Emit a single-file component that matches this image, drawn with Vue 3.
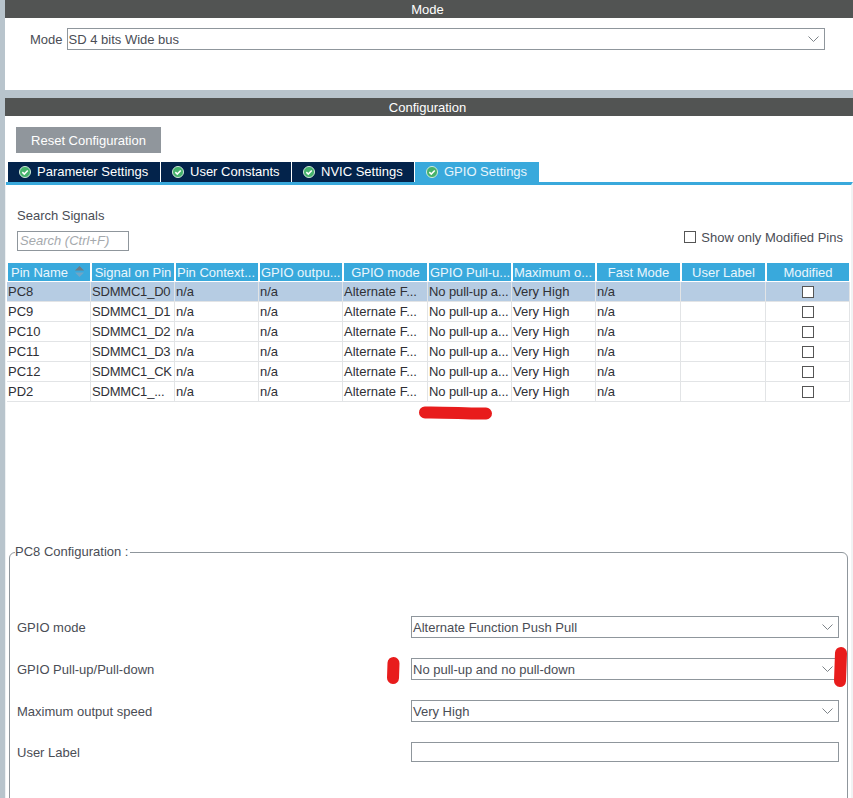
<script setup>
const tabs = [
  { name: 'Parameter Settings', width: 152 },
  { name: 'User Constants', width: 130 },
  { name: 'NVIC Settings', width: 122 },
  { name: 'GPIO Settings', width: 124, active: true },
]
const columns = [
  { name: 'Pin Name', sort: true },
  { name: 'Signal on Pin' },
  { name: 'Pin Context...', left: true },
  { name: 'GPIO outpu...', left: true },
  { name: 'GPIO mode' },
  { name: 'GPIO Pull-u...', left: true },
  { name: 'Maximum o...', left: true },
  { name: 'Fast Mode' },
  { name: 'User Label' },
  { name: 'Modified' },
]
const rows = [
  ['PC8', 'SDMMC1_D0'],
  ['PC9', 'SDMMC1_D1'],
  ['PC10', 'SDMMC1_D2'],
  ['PC11', 'SDMMC1_D3'],
  ['PC12', 'SDMMC1_CK'],
  ['PD2', 'SDMMC1_...'],
]
const fields = [
  { label: 'GPIO mode', value: 'Alternate Function Push Pull' },
  { label: 'GPIO Pull-up/Pull-down', value: 'No pull-up and no pull-down' },
  { label: 'Maximum output speed', value: 'Very High' },
]
</script>

<template>
  <div class="page">
    <section class="mode">
      <h2 class="bar">Mode</h2>
      <div class="mode-body">
        <span class="mode-label">Mode</span>
        <div class="select mode-select">
          <span>SD 4 bits Wide bus</span>
          <svg class="chev" viewBox="0 0 11 6"><path d="M.5.5l5 5 5-5" /></svg>
        </div>
      </div>
    </section>

    <section class="config">
      <h2 class="bar">Configuration</h2>
      <button class="reset">Reset Configuration</button>
      <div class="tabs">
        <div v-for="t in tabs" :key="t.name" class="tab" :class="{ active: t.active }" :style="{ width: t.width + 'px' }">
          <svg class="ok" viewBox="0 0 13 13">
            <circle cx="6.5" cy="6.5" r="6" />
            <path d="M3.6 6.6l2.1 2.1 3.8-3.9" />
          </svg>
          <span>{{ t.name }}</span>
        </div>
      </div>
      <div class="content">
        <div class="search-row">
          <div class="search">
            <label>Search Signals</label>
            <div class="search-input">Search (Ctrl+F)</div>
          </div>
          <div class="only-modified">
            <span class="check"></span>
            <span>Show only Modified Pins</span>
          </div>
        </div>

        <div class="table">
          <div class="tr thead">
            <div v-for="c in columns" :key="c.name" class="th" :class="{ left: c.left, sorted: c.sort }">
              <span>{{ c.name }}</span>
              <svg v-if="c.sort" class="sort" viewBox="0 0 9 11">
                <path class="up" d="M4.5 0L9 4.5H0z" />
                <path class="down" d="M0 6.5h9L4.5 11z" />
              </svg>
            </div>
          </div>
          <div v-for="(r, i) in rows" :key="r[0]" class="tr row" :class="{ selected: i === 0 }">
            <div class="td">{{ r[0] }}</div>
            <div class="td signal">{{ r[1] }}</div>
            <div class="td">n/a</div>
            <div class="td">n/a</div>
            <div class="td">Alternate F...</div>
            <div class="td tight">No pull-up a...</div>
            <div class="td">Very High</div>
            <div class="td">n/a</div>
            <div class="td"></div>
            <div class="td center"><span class="check"></span></div>
          </div>
        </div>

        <fieldset class="pin-config">
          <legend>PC8 Configuration :</legend>
          <div v-for="f in fields" :key="f.label" class="field">
            <label>{{ f.label }}</label>
            <div class="select">
              <span>{{ f.value }}</span>
              <svg class="chev" viewBox="0 0 11 6"><path d="M.5.5l5 5 5-5" /></svg>
            </div>
          </div>
          <div class="field last">
            <label>User Label</label>
            <div class="text-input"></div>
          </div>
        </fieldset>
      </div>
    </section>

    <svg class="marks" viewBox="0 0 853 798">
      <path d="M425 412.500C445 412 470 414 486 413.500" />
      <path d="M393.500 663L393 678" />
      <path d="M841 653L840 681" />
    </svg>
  </div>
</template>

<style>
html, body { margin: 0; padding: 0; overflow: hidden; }
</style>

<style scoped>
.page {
  position: relative;
  width: 853px;
  height: 798px;
  overflow: hidden;
  box-sizing: border-box;
  padding-left: 5px;
  background: #b8c4cc;
  font-family: "Liberation Sans", Arial, sans-serif;
  font-size: 13px;
  color: #4a4d55;
}
.bar {
  margin: 0;
  height: 18px;
  padding-right: 3px;
  line-height: 19px;
  background: #525453;
  color: #fff;
  font-size: 13px;
  font-weight: 400;
  text-align: center;
}
.mode { height: 90px; margin-bottom: 8px; background: #fff; }
.mode-body { display: flex; align-items: center; padding: 10px 28px 0 25px; }
.mode-label { margin-right: 4px; }
.mode-select { flex: 1; }
.select {
  box-sizing: border-box;
  height: 22px;
  display: flex;
  align-items: center;
  justify-content: space-between;
  padding: 0 5px 0 1px;
  border: 1px solid #8f969c;
  background: #fff;
}
.chev { width: 11px; height: 6px; fill: none; stroke: #7d8388; stroke-width: 1; }
.config { height: 700px; background: #fff; }
.reset {
  display: block;
  margin: 11px 0 0 11px;
  width: 145px;
  height: 26px;
  padding: 0;
  border: 0;
  background: #90969c;
  color: #fff;
  font: inherit;
}
.tabs { display: flex; gap: 1px; margin: 9px 0 0 3px; height: 20px; }
.tab {
  box-sizing: border-box;
  display: flex;
  align-items: center;
  padding-left: 11px;
  background: #03234b;
  color: #fff;
}
.tab span { margin-top: -2px; }
.tab.active { background: #39a9dc; color: #e8f5fb; }
.ok { width: 12px; height: 12px; margin: -1px 6px 0 0; flex: none; }
.ok circle { fill: #45b26b; stroke: #d8eee0; stroke-width: 1; }
.ok path { fill: none; stroke: #fff; stroke-width: 1.7; }
.content {
  width: 847px;
  margin-left: 1px;
  border-top: 3px solid #39a9dc;
  border-right: 2px solid #f1f3f4;
  box-shadow: -1px 0 0 #eef1f3;
  background: #fff;
  box-sizing: border-box;
}
.search-row { display: flex; justify-content: space-between; height: 78px; padding: 24px 8px 0 11px; box-sizing: border-box; }
.search label { display: block; line-height: 14px; }
.search-input {
  box-sizing: border-box;
  width: 112px;
  height: 20px;
  margin-top: 8px;
  padding-left: 2px;
  line-height: 18px;
  border: 1px solid #8f969c;
  color: #a5a9ad;
  font-style: italic;
}
.only-modified { display: flex; align-items: center; gap: 5px; height: 14px; margin-top: 21px; }
.check {
  display: block;
  box-sizing: border-box;
  width: 12px;
  height: 12px;
  border: 1px solid #555;
  background: #fff;
}
.table { margin-left: 1px; width: 843px; }
.tr {
  display: grid;
  grid-template-columns: 84px 84px 84px 84px 85px 84px 84px 85px 85px 84px;
}
.thead { height: 18px; margin-bottom: 1px; }
.th {
  position: relative;
  margin: 0 1px 0 1px;
  background: #39a9dc;
  color: #eaf6fc;
  line-height: 19px;
  text-align: center;
  white-space: nowrap;
  overflow: hidden;
}
.th.left { text-align: left; padding-left: 1px; }
.th.sorted { text-align: left; padding-left: 3px; }
.sort { position: absolute; top: 3px; right: 6px; width: 9px; height: 11px; }
.sort .up { fill: #6b7c86; }
.sort .down { fill: #6fa5c6; }
.row { height: 20px; box-sizing: border-box; border-bottom: 1px solid #e2e4e6; color: #2f3036; }
.row.selected { background: #b6cce3; }
.td {
  padding-left: 1px;
  line-height: 19px;
  border-right: 1px solid #e2e4e6;
  white-space: nowrap;
  overflow: hidden;
}
.td.signal { letter-spacing: -0.2px; }
.td.tight { letter-spacing: -0.1px; }
.td.center { display: flex; align-items: center; justify-content: center; }
.pin-config {
  box-sizing: border-box;
  margin: 143px 0 0 3px;
  padding: 0 8px 0 7px;
  width: 839px;
  height: 300px;
  border: 1px solid #8f969c;
  border-radius: 6px;
}
.pin-config legend { margin-left: -2px; padding: 0 2px 0 0; line-height: 14px; }
.field {
  display: flex;
  align-items: center;
  justify-content: space-between;
  margin-top: 20px;
}
.field:first-of-type { margin-top: 57px; }
.field .select { width: 428px; }
.text-input { box-sizing: border-box; width: 428px; height: 20px; border: 1px solid #8f969c; }
.marks {
  position: absolute;
  inset: 0;
  width: 853px;
  height: 798px;
  pointer-events: none;
}
.marks path { fill: none; stroke: #e81c1c; stroke-width: 12; stroke-linecap: round; }
</style>
